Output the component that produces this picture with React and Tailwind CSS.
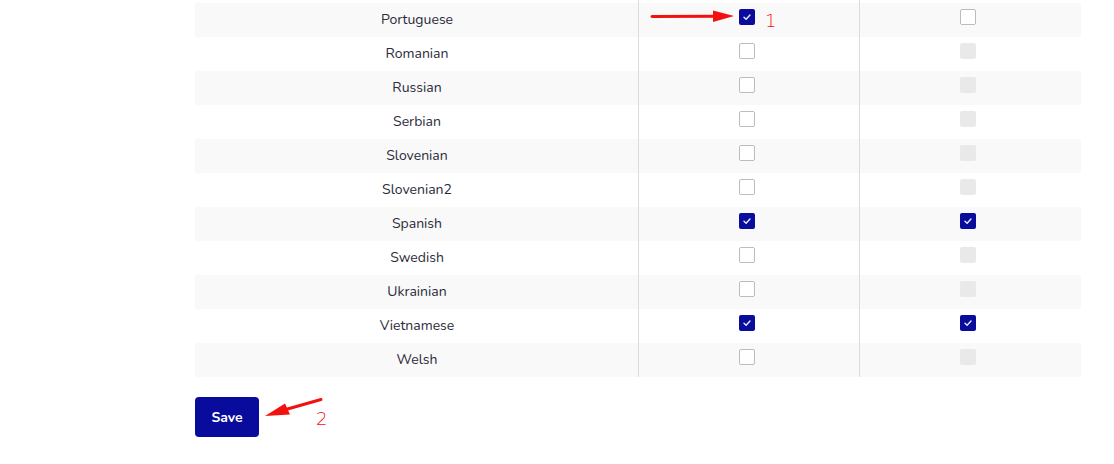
import React from 'react';

const rows = [
    { name: 'Portuguese', a: true, b: false, bEnabled: true },
    { name: 'Romanian', a: false, b: false },
    { name: 'Russian', a: false, b: false },
    { name: 'Serbian', a: false, b: false },
    { name: 'Slovenian', a: false, b: false },
    { name: 'Slovenian2', a: false, b: false },
    { name: 'Spanish', a: true, b: true },
    { name: 'Swedish', a: false, b: false },
    { name: 'Ukrainian', a: false, b: false },
    { name: 'Vietnamese', a: true, b: true },
    { name: 'Welsh', a: false, b: false },
];

function Box({ checked, disabled }) {
    if (checked) {
        return (
            <span className="w-4 h-4 rounded-[2px] bg-[#0a0c9b] flex items-center justify-center">
                <svg width="10" height="10" viewBox="0 0 10 10">
                    <path d="M2 5.2 L4.1 7.2 L8 3" fill="none" stroke="#e6ecff" strokeWidth="1.4" strokeLinecap="round" strokeLinejoin="round" />
                </svg>
            </span>
        );
    }
    if (disabled) {
        return <span className="w-4 h-4 rounded-[2px] bg-[#e9e9e9]" />;
    }
    return <span className="w-4 h-4 rounded-[2px] border border-[#bcbcbc] bg-white" />;
}

export default function App() {
    return (
        <div className="relative w-[1114px] h-[464px] bg-white text-[#2b2b3a] overflow-hidden" style={{ fontFamily: 'Nunito, "Noto Sans", Lato, sans-serif' }}>
            <div className="ml-[195px] w-[886px]">
                <div className="grid grid-cols-[444px_221px_221px] h-[3px]">
                    <div className="border-r border-[#dcdcdc]" />
                    <div className="border-r border-[#dcdcdc]" />
                    <div />
                </div>
                {rows.map((r, i) => (
                    <div key={r.name} className={`grid grid-cols-[444px_221px_221px] h-[34px] ${i % 2 === 0 ? 'bg-[#f9f9f9]' : 'bg-white'}`}>
                        <div className="border-r border-[#dcdcdc] flex items-center justify-center text-[14px] pb-[2px] pl-[1px]">{r.name}</div>
                        <div className="border-r border-[#dcdcdc] flex items-center justify-center pb-[6px] pr-[5px]">
                            <Box checked={r.a} />
                        </div>
                        <div className="flex items-center justify-center pb-[6px] pr-[5px]">
                            <Box checked={r.b} disabled={!r.b && !r.bEnabled} />
                        </div>
                    </div>
                ))}
                <button className="mt-[20px] w-[64px] h-[40px] rounded-[4px] bg-[#080b9c] text-white font-bold text-[14px]">Save</button>
            </div>

            <svg className="absolute left-0 top-0" width="1114" height="464" viewBox="0 0 1114 464">
                <path d="M652 16.5 L716 16.2" stroke="#f51010" strokeWidth="3" strokeLinecap="round" />
                <path d="M713 10.5 L734 16 L713 22 Z" fill="#f51010" />
                <path d="M321 399.5 L284 410" stroke="#f51010" strokeWidth="3" strokeLinecap="round" />
                <path d="M285 403.5 L265 416 L290 414.5 Z" fill="#f51010" />
            </svg>
            <span className="absolute left-[765px] top-[7px] text-[18px] text-[#f51010]" style={{ fontFamily: '"DejaVu Sans", sans-serif', fontWeight: 300 }}>1</span>
            <span className="absolute left-[316px] top-[405px] text-[18px] text-[#f51010]" style={{ fontFamily: '"DejaVu Sans", sans-serif', fontWeight: 300 }}>2</span>
        </div>
    );
}
